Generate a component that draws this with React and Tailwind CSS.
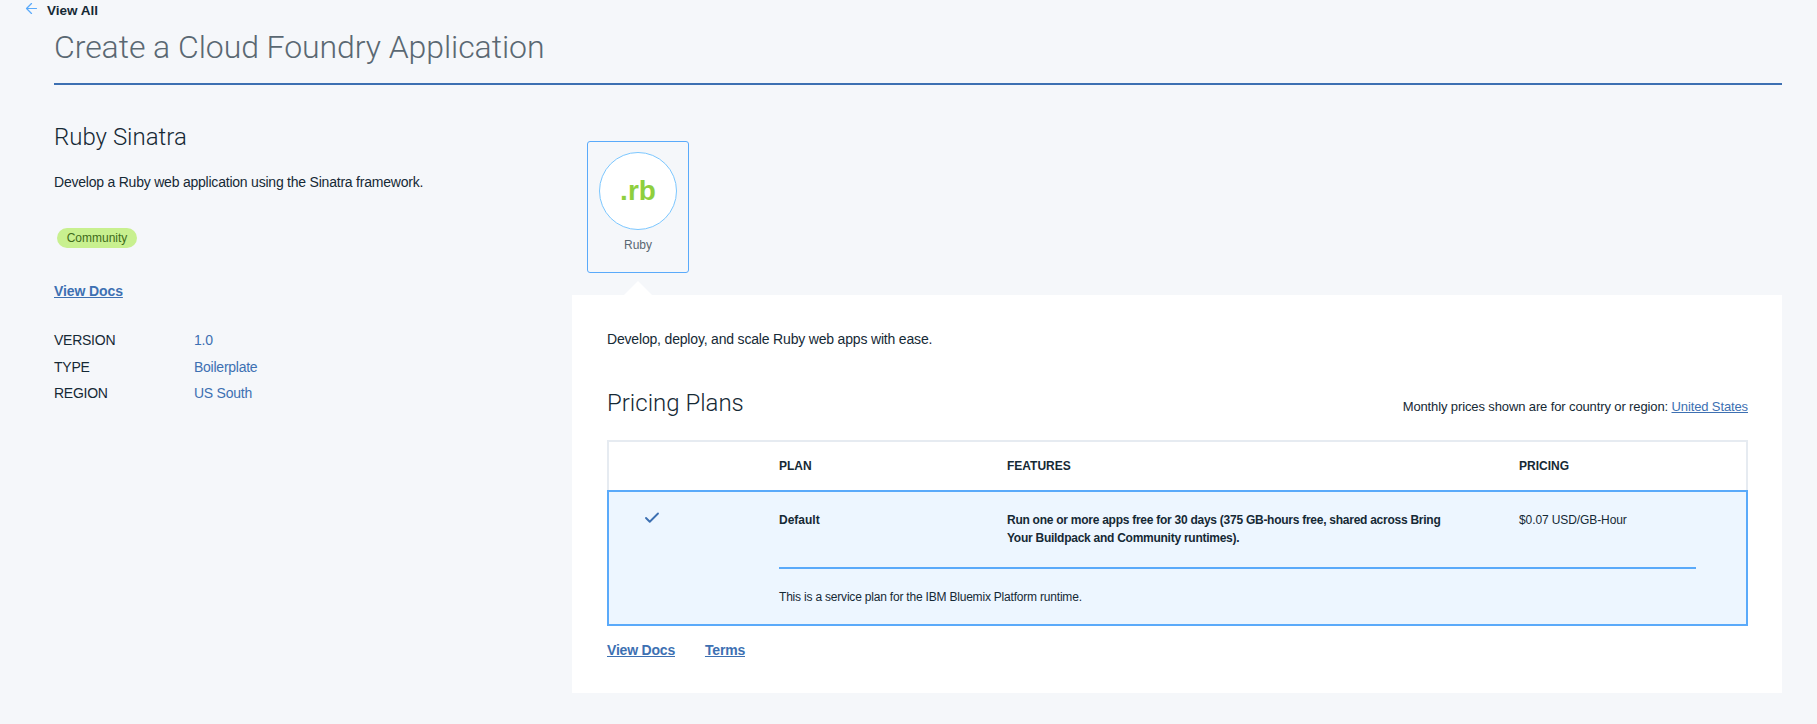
import React from 'react';
import { ArrowLeft, Check } from 'lucide-react';

const sans = "font-['Liberation_Sans',Arial,sans-serif]";

function MetaRow({ label, value }) {
  return (
    <div className="flex h-[26.5px] items-center text-[14px] tracking-[-0.25px]">
      <span className="w-[140px] text-[#152935]">{label}</span>
      <span className="text-[#3d70b2]">{value}</span>
    </div>
  );
}

function PlanTable() {
  return (
    <div className="mt-[20px]">
      <div className="grid h-[50px] grid-cols-[170px_228px_512px_1fr] items-center border-x-2 border-t-2 border-[#e6ebf1] text-[12px] font-bold text-[#152935]">
        <span />
        <span>PLAN</span>
        <span>FEATURES</span>
        <span>PRICING</span>
      </div>
      <div className="h-[136px] border-2 border-[#5aaafa] bg-[#edf6ff] text-[12px] text-[#152935]">
        <div className="grid h-[75px] grid-cols-[170px_228px_512px_1fr] pt-[19px]">
          <div className="pl-[34px]">
            <Check size={18} strokeWidth={2.5} className="-mt-[2px] text-[#3d70b2]" />
          </div>
          <span className="font-bold leading-[18px]">Default</span>
          <span className="w-[450px] font-bold leading-[18px] tracking-[-0.26px]">
            Run one or more apps free for 30 days (375 GB-hours free, shared across Bring Your Buildpack and Community runtimes).
          </span>
          <span className="leading-[18px] tracking-[-0.1px]">$0.07 USD/GB-Hour</span>
        </div>
        <div className="ml-[170px] mr-[50px] border-t-2 border-[#5aaafa] pt-[19px] leading-[18px] tracking-[-0.2px]">
          This is a service plan for the IBM Bluemix Platform runtime.
        </div>
      </div>
    </div>
  );
}

export default function App() {
  return (
    <div className={`${sans} h-[724px] overflow-hidden bg-[#f5f7fa] text-[#152935]`}>
      <a className="flex h-[21px] items-center pt-[1px] pl-[23px] text-[13.5px] font-bold">
        <ArrowLeft size={17} strokeWidth={1.75} className="-mt-[6px] text-[#5aaafa]" />
        <span className="ml-[7px]">View All</span>
      </a>
      <div className="mr-[35px] ml-[54px]">
        <h1 className="h-[64px] border-b-2 border-[#3d70b2] pt-[6px] font-['Roboto',sans-serif] text-[32px] leading-[40px] font-light tracking-[-0.07px] text-[#5a6872]">
          Create a Cloud Foundry Application
        </h1>
        <div className="flex">
          <div className="w-[517px] pt-[36px]">
            <h2 className="font-['Roboto',sans-serif] text-[24px] leading-[32px] font-light">Ruby Sinatra</h2>
            <p className="mt-[19px] text-[14px] leading-[20px] tracking-[-0.22px]">Develop a Ruby web application using the Sinatra framework.</p>
            <span className="mt-[36px] ml-[3px] flex h-[20px] w-[80px] items-center justify-center rounded-full bg-[#c8f08f] text-[12px] text-[#3e6b1a]">
              Community
            </span>
            <a className="mt-[33px] block text-[14px] leading-[20px] font-bold tracking-[-0.1px] text-[#3d70b2] underline">View Docs</a>
            <div className="mt-[26.5px]">
              <MetaRow label="VERSION" value="1.0" />
              <MetaRow label="TYPE" value="Boilerplate" />
              <MetaRow label="REGION" value="US South" />
            </div>
          </div>
          <div className="flex-1 pt-[56px]">
            <div className="ml-[16px] flex h-[132px] w-[102px] flex-col items-center rounded-[3px] border border-[#5aaafa] pt-[10px]">
              <div className="flex h-[78px] w-[78px] items-center justify-center rounded-full border border-[#7cc7ff] bg-white text-[28px] font-bold text-[#8ecf3e]">
                .rb
              </div>
              <span className="mt-[6px] text-[12px] text-[#5a6872]">Ruby</span>
            </div>
            <div className="relative mt-[22px] ml-[1px] h-[398px] bg-white pt-[34px] pr-[34px] pl-[35px]">
              <div className="absolute top-[-14px] left-[52px] h-0 w-0 border-x-[14px] border-b-[14px] border-x-transparent border-b-white" />
              <p className="text-[14px] leading-[20px] tracking-[-0.18px]">Develop, deploy, and scale Ruby web apps with ease.</p>
              <div className="mt-[37px] flex items-end justify-between">
                <h3 className="font-['Roboto',sans-serif] text-[24px] leading-[34px] font-light">Pricing Plans</h3>
                <p className="mb-[3px] text-[13px] leading-[20px] tracking-[-0.12px]">
                  Monthly prices shown are for country or region: <a className="text-[#3d70b2] underline">United States</a>
                </p>
              </div>
              <PlanTable />
              <div className="mt-[14px] flex gap-[30px] text-[14px] leading-[20px] font-bold tracking-[-0.2px] text-[#3d70b2] underline">
                <a>View Docs</a>
                <a>Terms</a>
              </div>
            </div>
          </div>
        </div>
      </div>
    </div>
  );
}
